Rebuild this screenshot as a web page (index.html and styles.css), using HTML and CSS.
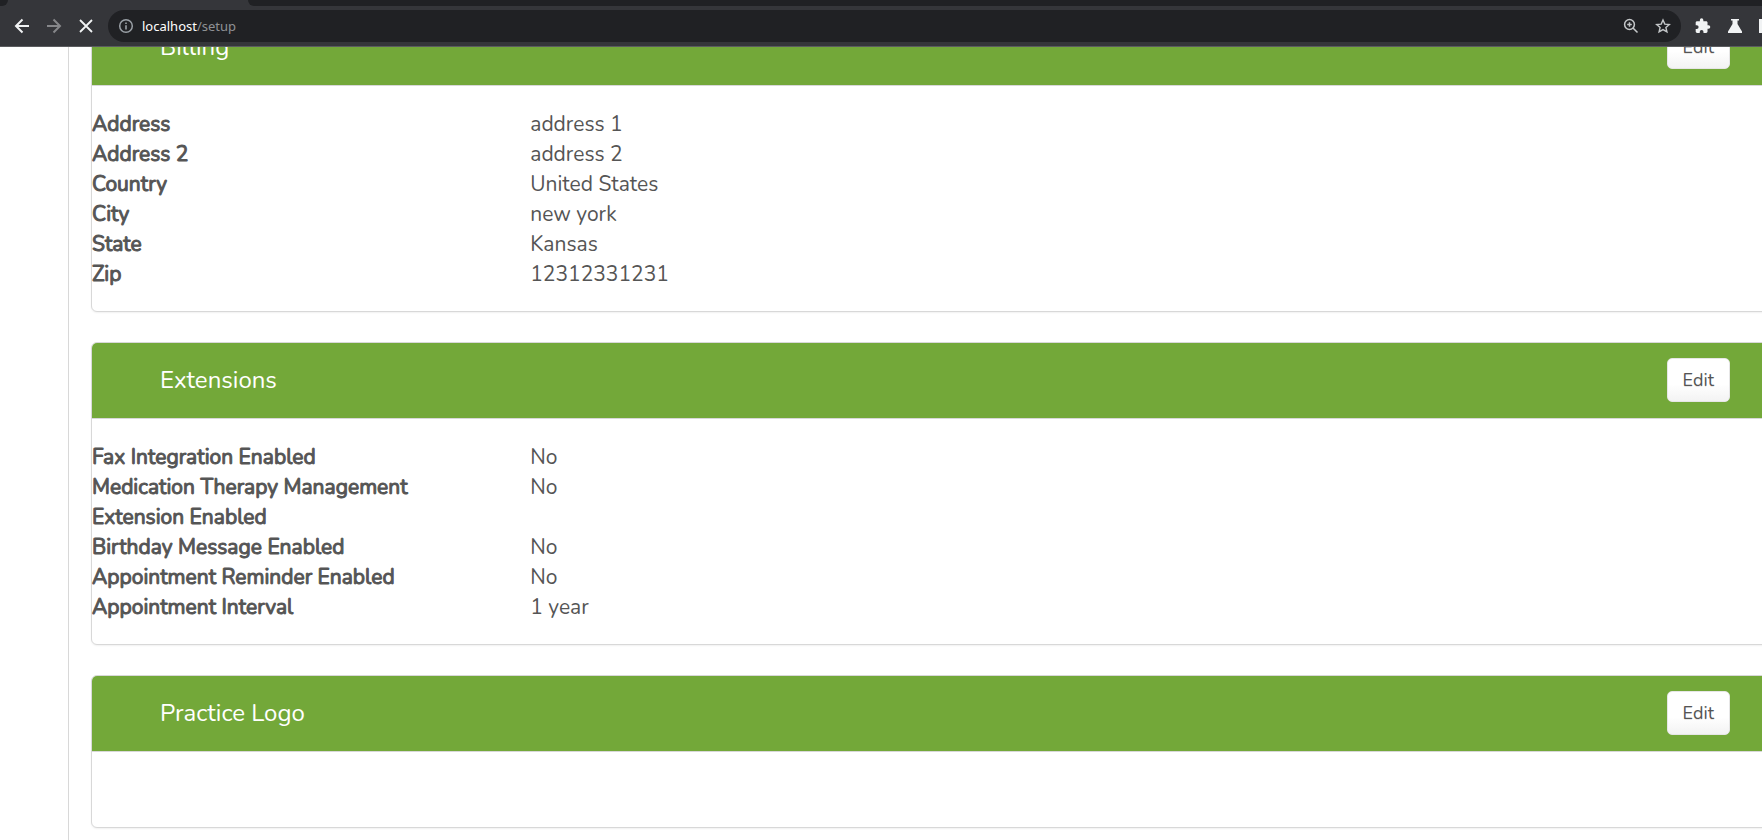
FILE: index.html
```
<!DOCTYPE html>
<html lang="en">
<head>
    <meta charset="UTF-8">
    <meta name="viewport" content="width=device-width, initial-scale=1.0">
    <title>Setup</title>
    <link rel="stylesheet" href="styles.css">
</head>
<body>
    <header class="browser">
        <div class="tab-strip">
            <div class="tab-gap tab-gap-left"></div>
            <div class="tab-gap tab-gap-right"></div>
        </div>
        <div class="toolbar">
            <button class="icon-btn" aria-label="Back">
                <svg width="18" height="18" viewBox="0 0 18 18"><path d="M16 9H3M9.500 2.500L3 9l6.500 6.500" fill="none" stroke="currentColor" stroke-width="2"/></svg>
            </button>
            <button class="icon-btn icon-btn-off" aria-label="Forward" disabled>
                <svg width="18" height="18" viewBox="0 0 18 18"><path d="M2 9h13M8.500 2.500L15 9l-6.500 6.500" fill="none" stroke="currentColor" stroke-width="2"/></svg>
            </button>
            <button class="icon-btn" aria-label="Stop">
                <svg width="18" height="18" viewBox="0 0 18 18"><path d="M3 3l12 12M15 3L3 15" fill="none" stroke="currentColor" stroke-width="1.800"/></svg>
            </button>
            <div class="address-bar">
                <svg class="info-icon" width="16" height="16" viewBox="0 0 16 16"><circle cx="8" cy="8" r="6.300" fill="none" stroke="currentColor" stroke-width="1.500"/><path d="M7.200 7.200h1.600v4.300H7.200zM7.200 4.400h1.600v1.600H7.200z" fill="currentColor"/></svg>
                <div class="url">localhost<span class="url-path">/setup</span></div>
                <button class="icon-btn pill-btn" aria-label="Zoom">
                    <svg width="16" height="16" viewBox="0 0 16 16"><path d="M10 10l4.500 4.500M6.500 4.200v4.600M4.200 6.500h4.600" fill="none" stroke="currentColor" stroke-width="1.500"/><circle cx="6.500" cy="6.500" r="4.900" fill="none" stroke="currentColor" stroke-width="1.500"/></svg>
                </button>
                <button class="icon-btn pill-btn" aria-label="Bookmark this tab">
                    <svg width="16" height="16" viewBox="0 0 16 16"><path d="M8 2l1.800 4.100 4.500.4-3.400 3 1 4.400L8 11.600l-3.900 2.300 1-4.400-3.400-3 4.500-.4z" fill="none" stroke="currentColor" stroke-width="1.400"/></svg>
                </button>
            </div>
            <button class="icon-btn ext-btn" aria-label="Extensions">
                <svg width="16" height="16" viewBox="1 1 23 22"><path d="M20.500 11H19V7c0-1.100-.9-2-2-2h-4V3.500a2.500 2.500 0 0 0-5 0V5H4c-1.100 0-2 .9-2 2v3.800h1.500a2.700 2.700 0 0 1 0 5.400H2V20c0 1.100.9 2 2 2h3.800v-1.500a2.700 2.700 0 0 1 5.400 0V22H17c1.100 0 2-.9 2-2v-4h1.500a2.500 2.500 0 0 0 0-5z" fill="currentColor"/></svg>
            </button>
            <button class="icon-btn ext-btn" aria-label="Experiments">
                <svg width="16" height="16" viewBox="0 0 16 16"><path d="M4 1h8v1.500h-1.500V6l4.500 7.500V15H1v-1.500L5.500 6V2.500H4z" fill="currentColor"/></svg>
            </button>
            <span class="side-panel"></span>
        </div>
    </header>

    <div class="page">
        <aside class="sidebar"></aside>
        <main class="content">
            <section class="panel">
                <div class="panel-heading">
                    <h2 class="panel-title">Billing</h2>
                    <button class="btn">Edit</button>
                </div>
                <dl class="panel-body">
                    <dt>Address</dt><dd>address 1</dd>
                    <dt>Address 2</dt><dd>address 2</dd>
                    <dt>Country</dt><dd>United States</dd>
                    <dt>City</dt><dd>new york</dd>
                    <dt>State</dt><dd>Kansas</dd>
                    <dt>Zip</dt><dd>12312331231</dd>
                </dl>
            </section>

            <section class="panel">
                <div class="panel-heading">
                    <h2 class="panel-title">Extensions</h2>
                    <button class="btn">Edit</button>
                </div>
                <dl class="panel-body">
                    <dt>Fax Integration Enabled</dt><dd>No</dd>
                    <dt>Medication Therapy Management Extension Enabled</dt><dd>No</dd>
                    <dt>Birthday Message Enabled</dt><dd>No</dd>
                    <dt>Appointment Reminder Enabled</dt><dd>No</dd>
                    <dt>Appointment Interval</dt><dd>1 year</dd>
                </dl>
            </section>

            <section class="panel">
                <div class="panel-heading">
                    <h2 class="panel-title">Practice Logo</h2>
                    <button class="btn">Edit</button>
                </div>
                <div class="panel-body panel-body-empty"></div>
            </section>
        </main>
    </div>
</body>
</html>
```
FILE: styles.css
```
* {
    box-sizing: border-box;
    margin: 0;
    padding: 0;
}

body {
    display: flex;
    flex-direction: column;
    height: 100vh;
    overflow: hidden;
    background: #fff;
    color: #555;
    font-family: Nunito, "Open Sans", sans-serif;
    font-size: 21px;
    line-height: 30px;
}

/* browser chrome */
.browser {
    flex: none;
    background: #35363a;
    border-bottom: 1px solid #5b5c5f;
    font-family: "Noto Sans", sans-serif;
}

.tab-strip {
    display: flex;
    gap: 240px;
    height: 6px;
}

.tab-gap {
    background: #202124;
}

.tab-gap-left {
    flex: none;
    width: 8px;
    border-bottom-right-radius: 6px;
}

.tab-gap-right {
    flex: 1;
    border-bottom-left-radius: 6px;
}

.toolbar {
    display: flex;
    align-items: center;
    height: 40px;
    padding-left: 6px;
}

.icon-btn {
    display: flex;
    flex: none;
    align-items: center;
    justify-content: center;
    width: 32px;
    height: 32px;
    border: none;
    background: none;
    color: #f1f3f4;
}

.icon-btn-off {
    color: #86878a;
}

.address-bar {
    display: flex;
    flex: 1;
    align-items: center;
    height: 32px;
    padding: 0 2px 0 10px;
    margin: 0 6px;
    border-radius: 16px;
    background: #202124;
}

.info-icon {
    color: #9aa0a6;
}

.url {
    flex: 1;
    margin-left: 8px;
    color: #fff;
    font-size: 13px;
    line-height: 20px;
}

.url-path {
    color: #8f9195;
}

.pill-btn {
    color: #c4c7c9;
}

.side-panel {
    width: 3px;
    height: 14px;
    margin-left: 8px;
    background: #f1f3f4;
}

/* page */
.page {
    display: flex;
    flex: 1;
    min-height: 0;
    overflow: hidden;
}

.sidebar {
    flex: none;
    width: 69px;
    border-right: 1px solid #d8d8d8;
}

/* wider than the window, scrolled down to the billing panel */
.content {
    flex: 1;
    margin: -38px -84px 0 22px;
}

.panel {
    margin-bottom: 30px;
    border: 1px solid #d8d8d8;
    border-radius: 6px;
    background: #fff;
    box-shadow: 0 1px 2px rgba(0, 0, 0, 0.06);
}

.panel-heading {
    display: flex;
    align-items: center;
    justify-content: space-between;
    height: 76px;
    padding: 0 115px 2px 68px;
    border-bottom: 1px solid #d8d8d8;
    border-radius: 5px 5px 0 0;
    background: #73a839;
    background-clip: padding-box;
}

.panel-title {
    color: #fff;
    font-size: 24px;
    font-weight: 400;
}

.btn {
    height: 44px;
    padding: 0 15px;
    border: 1px solid #e6e6e6;
    border-radius: 5px;
    background: linear-gradient(#fff 60%, #f3f3f3);
    color: #555;
    font-family: inherit;
    font-size: 18px;
    text-shadow: 0 1px 0 rgba(0, 0, 0, 0.1);
}

.panel-body {
    display: grid;
    grid-template-columns: 25% 1fr;
    padding: 23px 0 22px;
}

.panel-body dt {
    padding-right: 60px;
    -webkit-text-stroke: 1px #555;
}

.panel-body-empty {
    padding-bottom: 52px;
}
```
